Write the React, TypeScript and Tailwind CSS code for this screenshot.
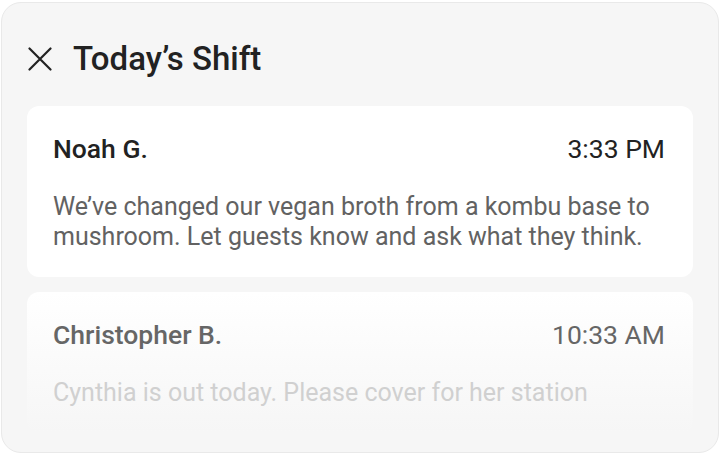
const font = { fontFamily: 'Roboto, "Noto Sans", sans-serif' };

interface Note {
  author: string;
  time: string;
  body: string;
}

const notes: Note[] = [
  {
    author: 'Noah G.',
    time: '3:33 PM',
    body: 'We’ve changed our vegan broth from a kombu base to mushroom. Let guests know and ask what they think.',
  },
  {
    author: 'Christopher B.',
    time: '10:33 AM',
    body: 'Cynthia is out today. Please cover for her station',
  },
];

function CloseIcon() {
  return (
    <svg width="24" height="24" viewBox="0 0 24 24" fill="none" stroke="#222" strokeWidth="2.2" strokeLinecap="round">
      <path d="M1.5 1.5 L22.5 22.5 M22.5 1.5 L1.5 22.5" />
    </svg>
  );
}

function NoteCard({ note, faded }: { note: Note; faded?: boolean }) {
  return (
    <div
      className={`shrink-0 rounded-[12px] pl-[26px] pr-[28px] pt-[27px] pb-[25px] ${
        faded ? 'bg-gradient-to-b from-white to-[#f6f6f6]' : 'bg-white'
      }`}
    >
      <div className="flex items-baseline justify-between">
        <span className={`text-[26.5px] leading-[32px] font-medium ${faded ? 'text-[#666]' : 'text-[#222]'}`}>
          {note.author}
        </span>
        <span className={`text-[26.5px] leading-[32px] ${faded ? 'text-[#666]' : 'text-[#222]'}`}>{note.time}</span>
      </div>
      <p className={`mt-[27px] text-[25px] leading-[30px] ${faded ? 'text-[#d0d0d0]' : 'text-[#626262]'}`}>
        {note.body}
      </p>
    </div>
  );
}

export default function App() {
  return (
    <div className="h-[455px] w-[720px] bg-white pt-[2px] px-[1px]" style={font}>
      <div className="flex h-[451px] flex-col overflow-hidden rounded-[20px] border border-[#e9e9e9] bg-[#f6f6f6] px-[25px] pt-[36px]">
        <div className="flex h-[40px] items-center gap-[21px] pl-[1px]">
          <CloseIcon />
          <h1 className="text-[33px] leading-[40px] font-medium text-[#222]">Today’s Shift</h1>
        </div>
        <div className="mt-[27px] flex flex-col gap-[15px]">
          <NoteCard note={notes[0]} />
          <NoteCard note={notes[1]} faded />
        </div>
      </div>
    </div>
  );
}
